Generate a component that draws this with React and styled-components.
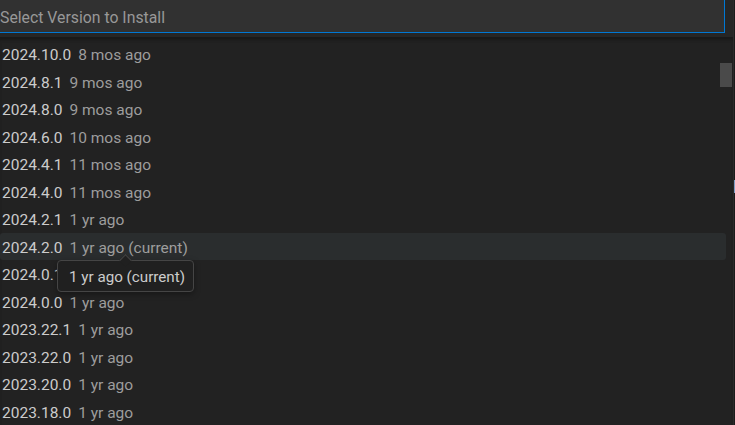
import React from "react";
import styled, { createGlobalStyle } from "styled-components";

const Global = createGlobalStyle`
  html, body { margin: 0; padding: 0; background: #222222; overflow: hidden; }
  body { font-family: Roboto, "Noto Sans", sans-serif; }
`;

const Page = styled.div`
  display: flex;
  width: 735px;
  height: 425px;
  overflow: hidden;
`;

const Widget = styled.div`
  position: relative;
  width: 733px;
  height: 425px;
  background: #222222;
  display: flex;
  flex-direction: column;
`;

const Edge = styled.div`
  position: relative;
  width: 2px;
  height: 425px;
  background: #1b1b1b;
  border-left: 1px solid #2b2b2b;
  box-sizing: border-box;
`;

const EdgeMark = styled.div`
  position: absolute;
  top: 180px;
  left: 0;
  width: 2px;
  height: 13px;
  background: #7d9cc4;
`;

const Header = styled.div`
  height: 37px;
  background: #262626;
  flex: none;
`;

const Input = styled.div`
  box-sizing: border-box;
  width: 725px;
  height: 34px;
  margin-top: -1px;
  padding-top: 2px;
  background: #313131;
  border: 1px solid #0078d4;
  border-left: none;
  display: flex;
  align-items: center;
  color: #989898;
  font-size: 15.8px;
  white-space: nowrap;
`;

const List = styled.div`
  position: relative;
  flex: 1;
  padding-top: 3px;
  box-shadow: inset 0 4px 3px -1px #191919;
`;

const Row = styled.div`
  height: 27.5px;
  width: 726px;
  box-sizing: border-box;
  display: flex;
  align-items: center;
  gap: 7px;
  padding: 3px 0 0 2px;
  border-radius: 3px;
  font-size: 15.5px;
  white-space: nowrap;
  background: ${(p) => (p.$hover ? "#2a2d2e" : "transparent")};
`;

const Label = styled.span`
  color: #cccccc;
`;

const Desc = styled.span`
  color: #9d9d9d;
`;

const Thumb = styled.div`
  position: absolute;
  right: 1px;
  top: 26px;
  width: 12px;
  height: 24px;
  background: #4a4a4a;
`;

const Tooltip = styled.div`
  position: absolute;
  left: 57px;
  top: 260px;
  box-sizing: border-box;
  width: 137px;
  height: 32px;
  padding: 2px 0 0 11px;
  background: #202020;
  border: 1px solid #454545;
  border-radius: 4px;
  color: #cccccc;
  font-size: 15.2px;
  white-space: nowrap;
  display: flex;
  align-items: center;
  box-shadow: 0 2px 6px rgba(0,0,0,0.35);

  &::before {
    content: "";
    position: absolute;
    left: 63px;
    top: -5px;
    width: 8px;
    height: 8px;
    background: #202020;
    border-left: 1px solid #454545;
    border-top: 1px solid #454545;
    transform: rotate(45deg);
  }
`;

const items = [
  ["2024.10.0", "8 mos ago"],
  ["2024.8.1", "9 mos ago"],
  ["2024.8.0", "9 mos ago"],
  ["2024.6.0", "10 mos ago"],
  ["2024.4.1", "11 mos ago"],
  ["2024.4.0", "11 mos ago"],
  ["2024.2.1", "1 yr ago"],
  ["2024.2.0", "1 yr ago (current)"],
  ["2024.0.1", "1 yr ago"],
  ["2024.0.0", "1 yr ago"],
  ["2023.22.1", "1 yr ago"],
  ["2023.22.0", "1 yr ago"],
  ["2023.20.0", "1 yr ago"],
  ["2023.18.0", "1 yr ago"],
];

export default function App() {
  return (
    <Page>
      <Global />
      <Widget>
        <Header>
          <Input>Select Version to Install</Input>
        </Header>
        <List>
          {items.map(([v, d], i) => (
            <Row key={v} $hover={i === 7}>
              <Label>{v}</Label>
              <Desc>{d}</Desc>
            </Row>
          ))}
          <Thumb />
        </List>
        <Tooltip>1 yr ago (current)</Tooltip>
      </Widget>
      <Edge>
        <EdgeMark />
      </Edge>
    </Page>
  );
}
